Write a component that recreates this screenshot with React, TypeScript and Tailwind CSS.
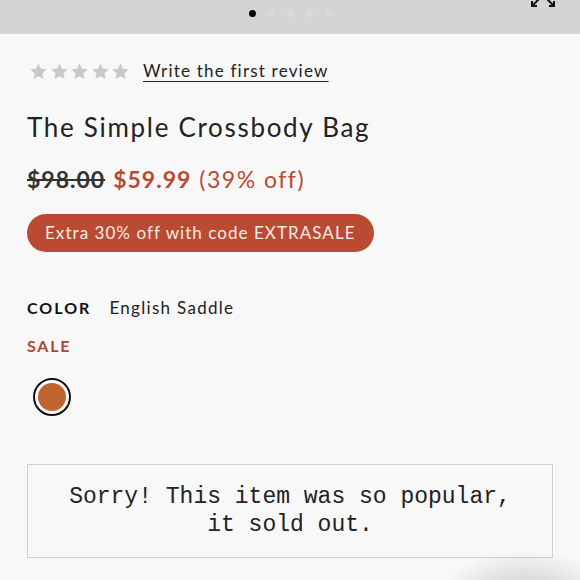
import React from "react"

function Star() {
  return (
    <svg width="19" height="19" viewBox="0 0 24 24" className="fill-[#c9c9c9]">
      <path d="M12 1.8l3.1 6.6 7.2.9-5.3 5 1.4 7.2L12 18l-6.4 3.5 1.4-7.2-5.3-5 7.2-.9z" />
    </svg>
  )
}

export default function App() {
  const sans = { fontFamily: "Lato, 'Noto Sans', sans-serif" }
  return (
    <div className="relative w-[580px] h-[580px] overflow-hidden bg-[#f8f8f8]" style={sans}>
      {/* Image carousel strip */}
      <div className="relative h-[34px] bg-[#d4d4d4] flex items-start justify-center pt-[10px]">
        <div className="flex gap-[12px]">
          <span className="w-[7px] h-[7px] rounded-full bg-black" />
          <span className="w-[7px] h-[7px] rounded-full bg-[#dadada]" />
          <span className="w-[7px] h-[7px] rounded-full bg-[#dadada]" />
          <span className="w-[7px] h-[7px] rounded-full bg-[#dadada]" />
          <span className="w-[7px] h-[7px] rounded-full bg-[#dadada]" />
        </div>
        <svg className="absolute right-[24px] top-[-4px]" width="26" height="14" viewBox="0 0 26 14" fill="none" stroke="#111" strokeWidth="2">
          <path d="M9 3L2 10M2 5v5h5" />
          <path d="M17 3l7 7M24 5v5h-5" />
        </svg>
      </div>

      <div className="px-[27px]">
        {/* Reviews */}
        <div className="flex items-center mt-[27px] h-[20px]">
          <div className="flex gap-[1.5px] ml-[2px]">
            <Star />
            <Star />
            <Star />
            <Star />
            <Star />
          </div>
          <a className="ml-[13px] text-[17px] text-[#222] underline underline-offset-[4px] decoration-[1px] tracking-[1.2px]">
            Write the first review
          </a>
        </div>

        {/* Title */}
        <h1 className="mt-[30px] text-[26px] leading-[32px] text-[#222] tracking-[1.7px]">The Simple Crossbody Bag</h1>

        {/* Price */}
        <div className="mt-[21px] flex items-baseline text-[23px] leading-[30px] tracking-[1px]">
          <span className="font-bold text-[#333] line-through decoration-[2px]">$98.00</span>
          <span className="ml-[8px] font-bold text-[#b94a33]">$59.99</span>
          <span className="ml-[8px] text-[#b94a33] tracking-[1.5px]">(39% off)</span>
        </div>

        {/* Promo badge */}
        <div className="mt-[20px] inline-flex h-[38px] items-center rounded-full bg-[#bb4a33] px-[18px] text-[17px] text-[#f8ece6] tracking-[1.05px]">
          Extra 30% off with code EXTRASALE
        </div>

        {/* Color */}
        <div className="mt-[43px] flex items-baseline">
          <span className="text-[16px] font-bold text-[#111] tracking-[2px]">COLOR</span>
          <span className="ml-[18px] text-[17px] text-[#222] tracking-[1.3px]">English Saddle</span>
        </div>
        <div className="mt-[13px] text-[16px] font-bold text-[#b0482f] tracking-[1.8px]">SALE</div>

        {/* Swatch */}
        <div className="mt-[20px] ml-[6px] w-[38px] h-[38px] rounded-full border-2 border-[#111] bg-white p-[3px]">
          <div className="w-full h-full rounded-full bg-[#c0652f]" />
        </div>

        {/* Sold out */}
        <div
          className="mt-[48px] h-[94px] border border-[#cfcfcf] flex items-center justify-center text-center text-[23px] leading-[28px] text-[#222]"
          style={{ fontFamily: "'Liberation Mono', 'Courier New', monospace" }}
        >
          <p>
            Sorry! This item was so popular,
            <br />
            it sold out.
          </p>
        </div>
      </div>

      <div className="absolute right-[-30px] bottom-[-60px] w-[170px] h-[90px] rounded-full bg-[radial-gradient(closest-side,rgba(0,0,0,0.18),rgba(0,0,0,0))]" />
    </div>
  )
}
